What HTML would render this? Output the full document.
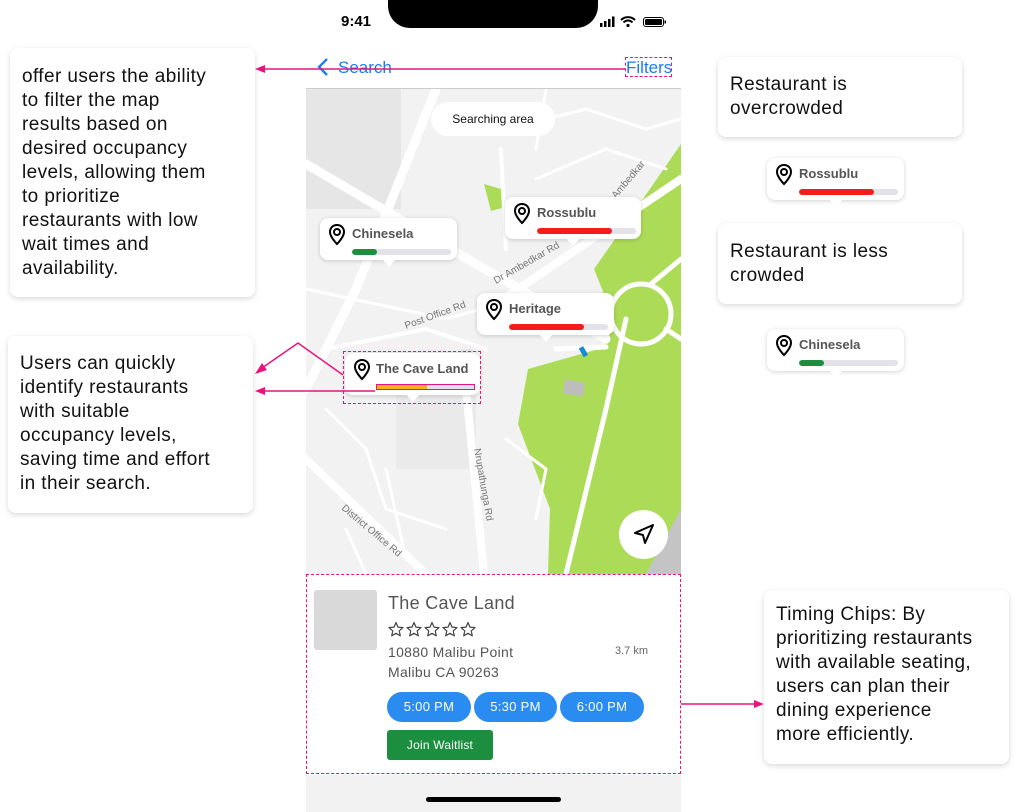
<!DOCTYPE html>
<html><head><meta charset="utf-8"><style>
*{margin:0;padding:0;box-sizing:border-box}
body{width:1017px;height:812px;background:#fff;position:relative;overflow:hidden;font-family:"Liberation Sans",sans-serif}
.abs{position:absolute}
.note{position:absolute;background:#fff;border-radius:8px;box-shadow:0 2px 6px rgba(0,0,0,.15);font-size:19px;line-height:24px;color:#111;letter-spacing:0.4px;white-space:nowrap}
.mk{position:absolute;background:#fff;border-radius:8px;box-shadow:0 1px 5px rgba(0,0,0,.18)}
.mk:after{content:"";position:absolute;left:50%;bottom:-7px;margin-left:-7px;border-left:7px solid transparent;border-right:7px solid transparent;border-top:8px solid #fff}
.mk .nm{position:absolute;left:32px;top:8px;font-size:13px;font-weight:bold;color:#555}
.mk .bar{position:absolute;left:32px;top:31px;width:99px;height:6px;border-radius:3px;background:#e2e2e8;overflow:hidden}
.mk .bar i{display:block;height:6px;border-radius:3px}
.mk svg{position:absolute;left:7px;top:5px}
.chip{position:absolute;top:692px;height:30px;border-radius:15px;background:#2a8cf0;color:#fff;font-size:13px;text-align:center;line-height:30px;letter-spacing:0.3px}
</style></head><body>

<div class="abs" style="left:306px;top:0;width:375px;height:812px;background:#fff"></div>
<div class="abs" style="left:388px;top:0;width:210px;height:28px;background:#000;border-radius:0 0 22px 22px"></div>
<div class="abs" style="left:341px;top:13px;font-size:15px;font-weight:bold;color:#000">9:41</div>
<svg class="abs" style="left:599px;top:15px" width="68" height="14" viewBox="0 0 68 14">
<rect x="1" y="8" width="2.5" height="4" fill="#000"/><rect x="5" y="6" width="2.5" height="6" fill="#000"/><rect x="9" y="4" width="2.5" height="8" fill="#000"/><rect x="13" y="1.5" width="2.5" height="10.5" fill="#000"/>
<path d="M22 5a10 10 0 0 1 14 0M24.5 7.5a6 6 0 0 1 9 0" stroke="#000" stroke-width="2" fill="none"/><circle cx="29" cy="10.5" r="1.6" fill="#000"/>
<rect x="44.5" y="2.5" width="20" height="9" rx="2.5" fill="none" stroke="#000" stroke-width="1"/><rect x="46" y="4" width="17" height="6" rx="1.3" fill="#000"/><rect x="65.5" y="5.5" width="1.5" height="3" fill="#000"/>
</svg>
<svg class="abs" style="left:315px;top:57px" width="16" height="20"><path d="M12 2L4 10l8 8" stroke="#1a7cf5" stroke-width="2.3" fill="none"/></svg>
<div class="abs" style="left:338px;top:58px;font-size:17px;color:#1a7cf5">Search</div>
<div class="abs" style="left:625px;top:57px;width:47px;height:20px;border:1px dashed #e8137e"></div>
<div class="abs" style="left:626px;top:58px;font-size:17px;color:#1a7cf5">Filters</div>
<div class="abs" style="left:306px;top:88px;width:375px;height:1px;background:#ccc"></div>

<svg class="abs" style="left:306px;top:89px" width="375" height="485" viewBox="0 0 375 485">
<rect width="375" height="485" fill="#f2f2f2"/>
<rect x="0" y="0" width="95" height="120" fill="#e6e6e6"/>
<rect x="90" y="270" width="80" height="110" fill="#eaeaea"/>
<polygon points="375,55 375,485 242,485 244,420 212,335 222,280 300,258 308,230 288,180 330,120" fill="#acdc57"/>
<polygon points="178,95 195,100 200,118 185,122" fill="#acdc57"/>
<g stroke="#fff" fill="none" stroke-linecap="round">
<path d="M0 75L170 175L300 250" stroke-width="9"/>
<path d="M130 0L50 200L0 300" stroke-width="9"/>
<path d="M160 300L178 485" stroke-width="8"/>
<path d="M175 225L375 90" stroke-width="8"/>
<path d="M0 370L120 485" stroke-width="8"/>
<path d="M0 200L140 230L210 210" stroke-width="3"/>
<path d="M20 260L120 240L180 260" stroke-width="4"/>
<path d="M200 40L280 20L340 40L375 30" stroke-width="3"/>
<path d="M230 90L300 60L360 80" stroke-width="3"/>
<path d="M260 485L300 320" stroke-width="5"/>
<path d="M300 320L320 230" stroke-width="5"/>
<circle cx="335" cy="225" r="30" stroke-width="5"/>
<path d="M360 240L375 250M345 195L375 170M300 258L250 260" stroke-width="5"/>
<path d="M20 320L60 360L80 420L140 440" stroke-width="3"/>
<path d="M40 440L60 485M80 380L100 470" stroke-width="3"/>
<path d="M200 350L240 380L230 430" stroke-width="3"/>
<path d="M195 60L200 160" stroke-width="4"/>
<path d="M240 0L230 60" stroke-width="3"/>
</g>
<rect x="155" y="260" width="12" height="40" fill="#e6e6e6"/>
<rect x="258" y="292" width="20" height="14" fill="#bdbdbd" transform="rotate(10 268 299)"/>
<rect x="275" y="258" width="5" height="10" fill="#1a8ad8" transform="rotate(-30 277 263)"/>
<polygon points="375,420 375,485 340,485" fill="#c4c4c4"/>
<g font-size="10" fill="#777" font-family="Liberation Sans">
<text x="100" y="240" transform="rotate(-20 100 240)">Post Office Rd</text>
<text x="168" y="360" transform="rotate(80 168 360)">Nrupathunga Rd</text>
<text x="35" y="420" transform="rotate(40 35 420)">District Office Rd</text>
<text x="190" y="195" transform="rotate(-30 190 195)">Dr Ambedkar Rd</text>
<text x="310" y="110" transform="rotate(-50 310 110)">Ambedkar</text>
</g>
</svg>
<div class="abs" style="left:431px;top:102px;width:124px;height:34px;border-radius:17px;background:#fff;font-size:12px;line-height:34px;text-align:center;color:#111">Searching area</div>
<div class="abs" style="left:619px;top:510px;width:49px;height:49px;border-radius:50%;background:#fff"></div>
<svg class="abs" style="left:632px;top:522px" width="24" height="24" viewBox="0 0 24 24"><path d="M3 11L21 3L13 21L11 13Z" stroke="#000" stroke-width="2" fill="none" stroke-linejoin="round"/></svg>

<div class="mk" style="left:320px;top:218px;width:137px;height:42px"><svg width="20" height="24" viewBox="0 0 20 24"><path d="M10 2C5.6 2 3 5.2 3 9c0 5 7 12 7 12s7-7 7-12c0-3.8-2.6-7-7-7z" stroke="#000" stroke-width="2" fill="none"/><circle cx="10" cy="9" r="3" stroke="#000" stroke-width="2" fill="none"/></svg><div class="nm">Chinesela</div><div class="bar"><i style="width:25px;background:#1e8e3e"></i></div></div>
<div class="mk" style="left:505px;top:197px;width:136px;height:42px"><svg width="20" height="24" viewBox="0 0 20 24"><path d="M10 2C5.6 2 3 5.2 3 9c0 5 7 12 7 12s7-7 7-12c0-3.8-2.6-7-7-7z" stroke="#000" stroke-width="2" fill="none"/><circle cx="10" cy="9" r="3" stroke="#000" stroke-width="2" fill="none"/></svg><div class="nm">Rossublu</div><div class="bar"><i style="width:75px;background:#f51c1c"></i></div></div>
<div class="mk" style="left:477px;top:293px;width:137px;height:42px"><svg width="20" height="24" viewBox="0 0 20 24"><path d="M10 2C5.6 2 3 5.2 3 9c0 5 7 12 7 12s7-7 7-12c0-3.8-2.6-7-7-7z" stroke="#000" stroke-width="2" fill="none"/><circle cx="10" cy="9" r="3" stroke="#000" stroke-width="2" fill="none"/></svg><div class="nm">Heritage</div><div class="bar"><i style="width:75px;background:#f51c1c"></i></div></div>
<div class="mk" style="left:345px;top:353px;width:135px;height:42px"><svg width="20" height="24" viewBox="0 0 20 24"><path d="M10 2C5.6 2 3 5.2 3 9c0 5 7 12 7 12s7-7 7-12c0-3.8-2.6-7-7-7z" stroke="#000" stroke-width="2" fill="none"/><circle cx="10" cy="9" r="3" stroke="#000" stroke-width="2" fill="none"/></svg><div class="nm" style="left:31px">The Cave Land</div><div class="bar" style="left:31px;top:31px;border:1px solid #e8137e;border-radius:0;height:6px"><i style="width:50px;background:#f7b218;border-radius:0;height:4px"></i></div></div>
<div class="abs" style="left:343px;top:351px;width:138px;height:53px;border:1px dashed #e8137e"></div>

<div class="abs" style="left:306px;top:574px;width:375px;height:200px;border:1px dashed #e8137e;background:#fff"></div>
<div class="abs" style="left:314px;top:590px;width:63px;height:60px;background:#d9d9d9;border-radius:3px"></div>
<div class="abs" style="left:388px;top:593px;font-size:18px;color:#555;letter-spacing:0.3px">The Cave Land</div>
<svg class="abs" style="left:388px;top:621px" width="90" height="18" viewBox="0 0 90 18">
<g fill="none" stroke="#444" stroke-width="1.2" stroke-linejoin="round">
<path id="s" d="M8 1.5l2 4.6 5 .5-3.8 3.3 1.1 4.9L8 12.3l-4.3 2.5 1.1-4.9L1 6.6l5-.5z"/>
<use href="#s" x="18"/><use href="#s" x="36"/><use href="#s" x="54"/><use href="#s" x="72"/>
</g></svg>
<div class="abs" style="left:388px;top:642px;font-size:14px;color:#555;line-height:20px;letter-spacing:0.3px">10880 Malibu Point<br>Malibu CA 90263</div>
<div class="abs" style="left:615px;top:645px;font-size:11px;color:#666">3.7 km</div>
<div class="chip" style="left:387px;width:84px">5:00 PM</div>
<div class="chip" style="left:474px;width:83px">5:30 PM</div>
<div class="chip" style="left:560px;width:84px">6:00 PM</div>
<div class="abs" style="left:387px;top:730px;width:106px;height:30px;background:#1b8e40;border-radius:3px;color:#fff;font-size:12px;text-align:center;line-height:30px;letter-spacing:0.2px">Join Waitlist</div>
<div class="abs" style="left:306px;top:775px;width:375px;height:37px;background:#f2f2f2"></div>
<div class="abs" style="left:426px;top:797px;width:135px;height:5px;border-radius:3px;background:#000"></div>

<div class="note" style="left:10px;top:48px;width:245px;height:249px;padding:17px 12px">offer users the ability<br>to filter the map<br>results based on<br>desired occupancy<br>levels, allowing them<br>to prioritize<br>restaurants with low<br>wait times and<br>availability.</div>
<div class="note" style="left:8px;top:336px;width:245px;height:177px;padding:16px 12px">Users can quickly<br>identify restaurants<br>with suitable<br>occupancy levels,<br>saving time and effort<br>in their search.</div>
<div class="note" style="left:718px;top:57px;width:244px;height:80px;padding:16px 12px">Restaurant is<br>overcrowded</div>
<div class="note" style="left:718px;top:223px;width:244px;height:81px;padding:17px 12px">Restaurant is less<br>crowded</div>
<div class="note" style="left:764px;top:590px;width:245px;height:174px;padding:13px 12px">Timing Chips: By<br>prioritizing restaurants<br>with available seating,<br>users can plan their<br>dining experience<br>more efficiently.</div>

<div class="mk" style="left:767px;top:158px;width:137px;height:42px"><svg width="20" height="24" viewBox="0 0 20 24"><path d="M10 2C5.6 2 3 5.2 3 9c0 5 7 12 7 12s7-7 7-12c0-3.8-2.6-7-7-7z" stroke="#000" stroke-width="2" fill="none"/><circle cx="10" cy="9" r="3" stroke="#000" stroke-width="2" fill="none"/></svg><div class="nm">Rossublu</div><div class="bar"><i style="width:75px;background:#f51c1c"></i></div></div>
<div class="mk" style="left:767px;top:329px;width:137px;height:42px"><svg width="20" height="24" viewBox="0 0 20 24"><path d="M10 2C5.6 2 3 5.2 3 9c0 5 7 12 7 12s7-7 7-12c0-3.8-2.6-7-7-7z" stroke="#000" stroke-width="2" fill="none"/><circle cx="10" cy="9" r="3" stroke="#000" stroke-width="2" fill="none"/></svg><div class="nm">Chinesela</div><div class="bar"><i style="width:25px;background:#1e8e3e"></i></div></div>

<svg class="abs" style="left:0;top:0" width="1017" height="812">
<g stroke="#e8137e" stroke-width="1.5" fill="#e8137e">
<line x1="262" y1="69" x2="626" y2="69"/><polygon points="255,69 265,65 265,73" stroke="none"/>
<polyline points="343,375 298,343 262,368" fill="none"/><polygon points="255,374 262,363 267,370" stroke="none"/>
<line x1="262" y1="391" x2="375" y2="391"/><polygon points="255,391 265,387 265,395" stroke="none"/>
<line x1="681" y1="704" x2="757" y2="704"/><polygon points="764,704 754,700 754,708" stroke="none"/>
</g>
</svg>
</body></html>
